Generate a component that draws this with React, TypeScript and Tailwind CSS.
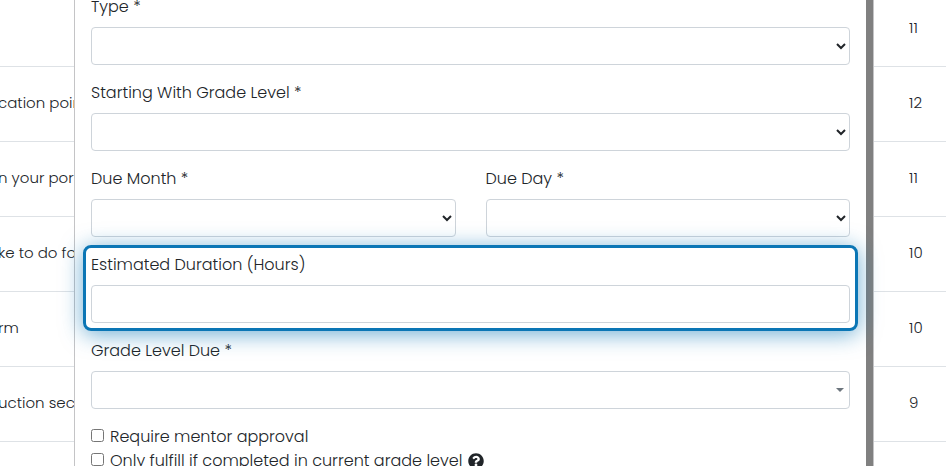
import { ReactNode } from 'react'
import { FaQuestionCircle } from 'react-icons/fa'

const rows = [
  { title: '', grade: 11 },
  { title: 'cation poin', grade: 12 },
  { title: 'n your por', grade: 11 },
  { title: 'ke to do fo', grade: 10 },
  { title: 'rm', grade: 10 },
  { title: 'uction sec', grade: 9 },
  { title: '', grade: '' },
]

const control = 'block h-[38px] w-full rounded border border-[#ced4da] bg-white px-2 text-[#212529]'

function Field({ id, label, children }: { id: string; label: string; children: ReactNode }) {
  return (
    <div className="relative mb-4">
      <label htmlFor={id} className="mb-2 block whitespace-nowrap">{label}</label>
      {children}
    </div>
  )
}

function SelectField({ id, label }: { id: string; label: string }) {
  return (
    <Field id={id} label={label}>
      <select id={id} className={control}>
        <option value=""></option>
      </select>
    </Field>
  )
}

function GradeTable() {
  return (
    <table className="-mt-[9px] w-full table-fixed border-collapse text-[15px]">
      <tbody>
        {rows.map((row, i) => (
          <tr key={i} className="h-[75px] border-b border-[#dee2e6]">
            <td className="whitespace-nowrap -indent-0.5">{row.title}</td>
            <td className="w-[72px] pl-[35px]">{row.grade}</td>
          </tr>
        ))}
      </tbody>
    </table>
  )
}

function TaskForm() {
  return (
    <form className="-mt-[5px] px-4">
      <SelectField id="type" label="Type *" />
      <SelectField id="start-grade" label="Starting With Grade Level *" />
      <div className="grid grid-cols-2 gap-[30px]">
        <SelectField id="due-month" label="Due Month *" />
        <SelectField id="due-day" label="Due Day *" />
      </div>
      <Field id="duration" label="Estimated Duration (Hours)">
        <input id="duration" type="text" className={control} />
        {/* tour spotlight */}
        <div className="pointer-events-none absolute -inset-2 z-10 rounded-lg border-3 border-[#0b76b5] shadow-[0_3px_22px_rgba(11,118,181,0.6)]" />
      </Field>
      <Field id="grade-due" label="Grade Level Due *">
        <div className="relative">
          <select id="grade-due" className={`${control} appearance-none`}>
            <option value=""></option>
          </select>
          <svg className="pointer-events-none absolute top-[17px] right-1.5 h-1 w-2" viewBox="0 0 8 4" fill="#6c757d">
            <path d="M0 0h8L4 4z" />
          </svg>
        </div>
      </Field>
      <div className="flex items-start gap-1.5">
        <input id="mentor" type="checkbox" className="mt-1 size-[13px]" />
        <label htmlFor="mentor">Require mentor approval</label>
      </div>
      <div className="flex items-start gap-1.5">
        <input id="current-only" type="checkbox" className="mt-1 size-[13px]" />
        <label htmlFor="current-only" className="flex items-center gap-1.5 whitespace-nowrap">
          Only fulfill if completed in current grade level
          <FaQuestionCircle />
        </label>
      </div>
    </form>
  )
}

export default function App() {
  return (
    <div className="relative h-screen overflow-hidden bg-white font-[Poppins,Inter,sans-serif] text-base font-light text-[#212529]">
      <GradeTable />
      <div className="absolute inset-y-0 right-[72px] left-[74px] flex border-x border-[#c4c4c6] bg-white">
        <div className="flex-1">
          <TaskForm />
        </div>
        <div className="w-[7px] bg-[#808080]" />
      </div>
    </div>
  )
}
